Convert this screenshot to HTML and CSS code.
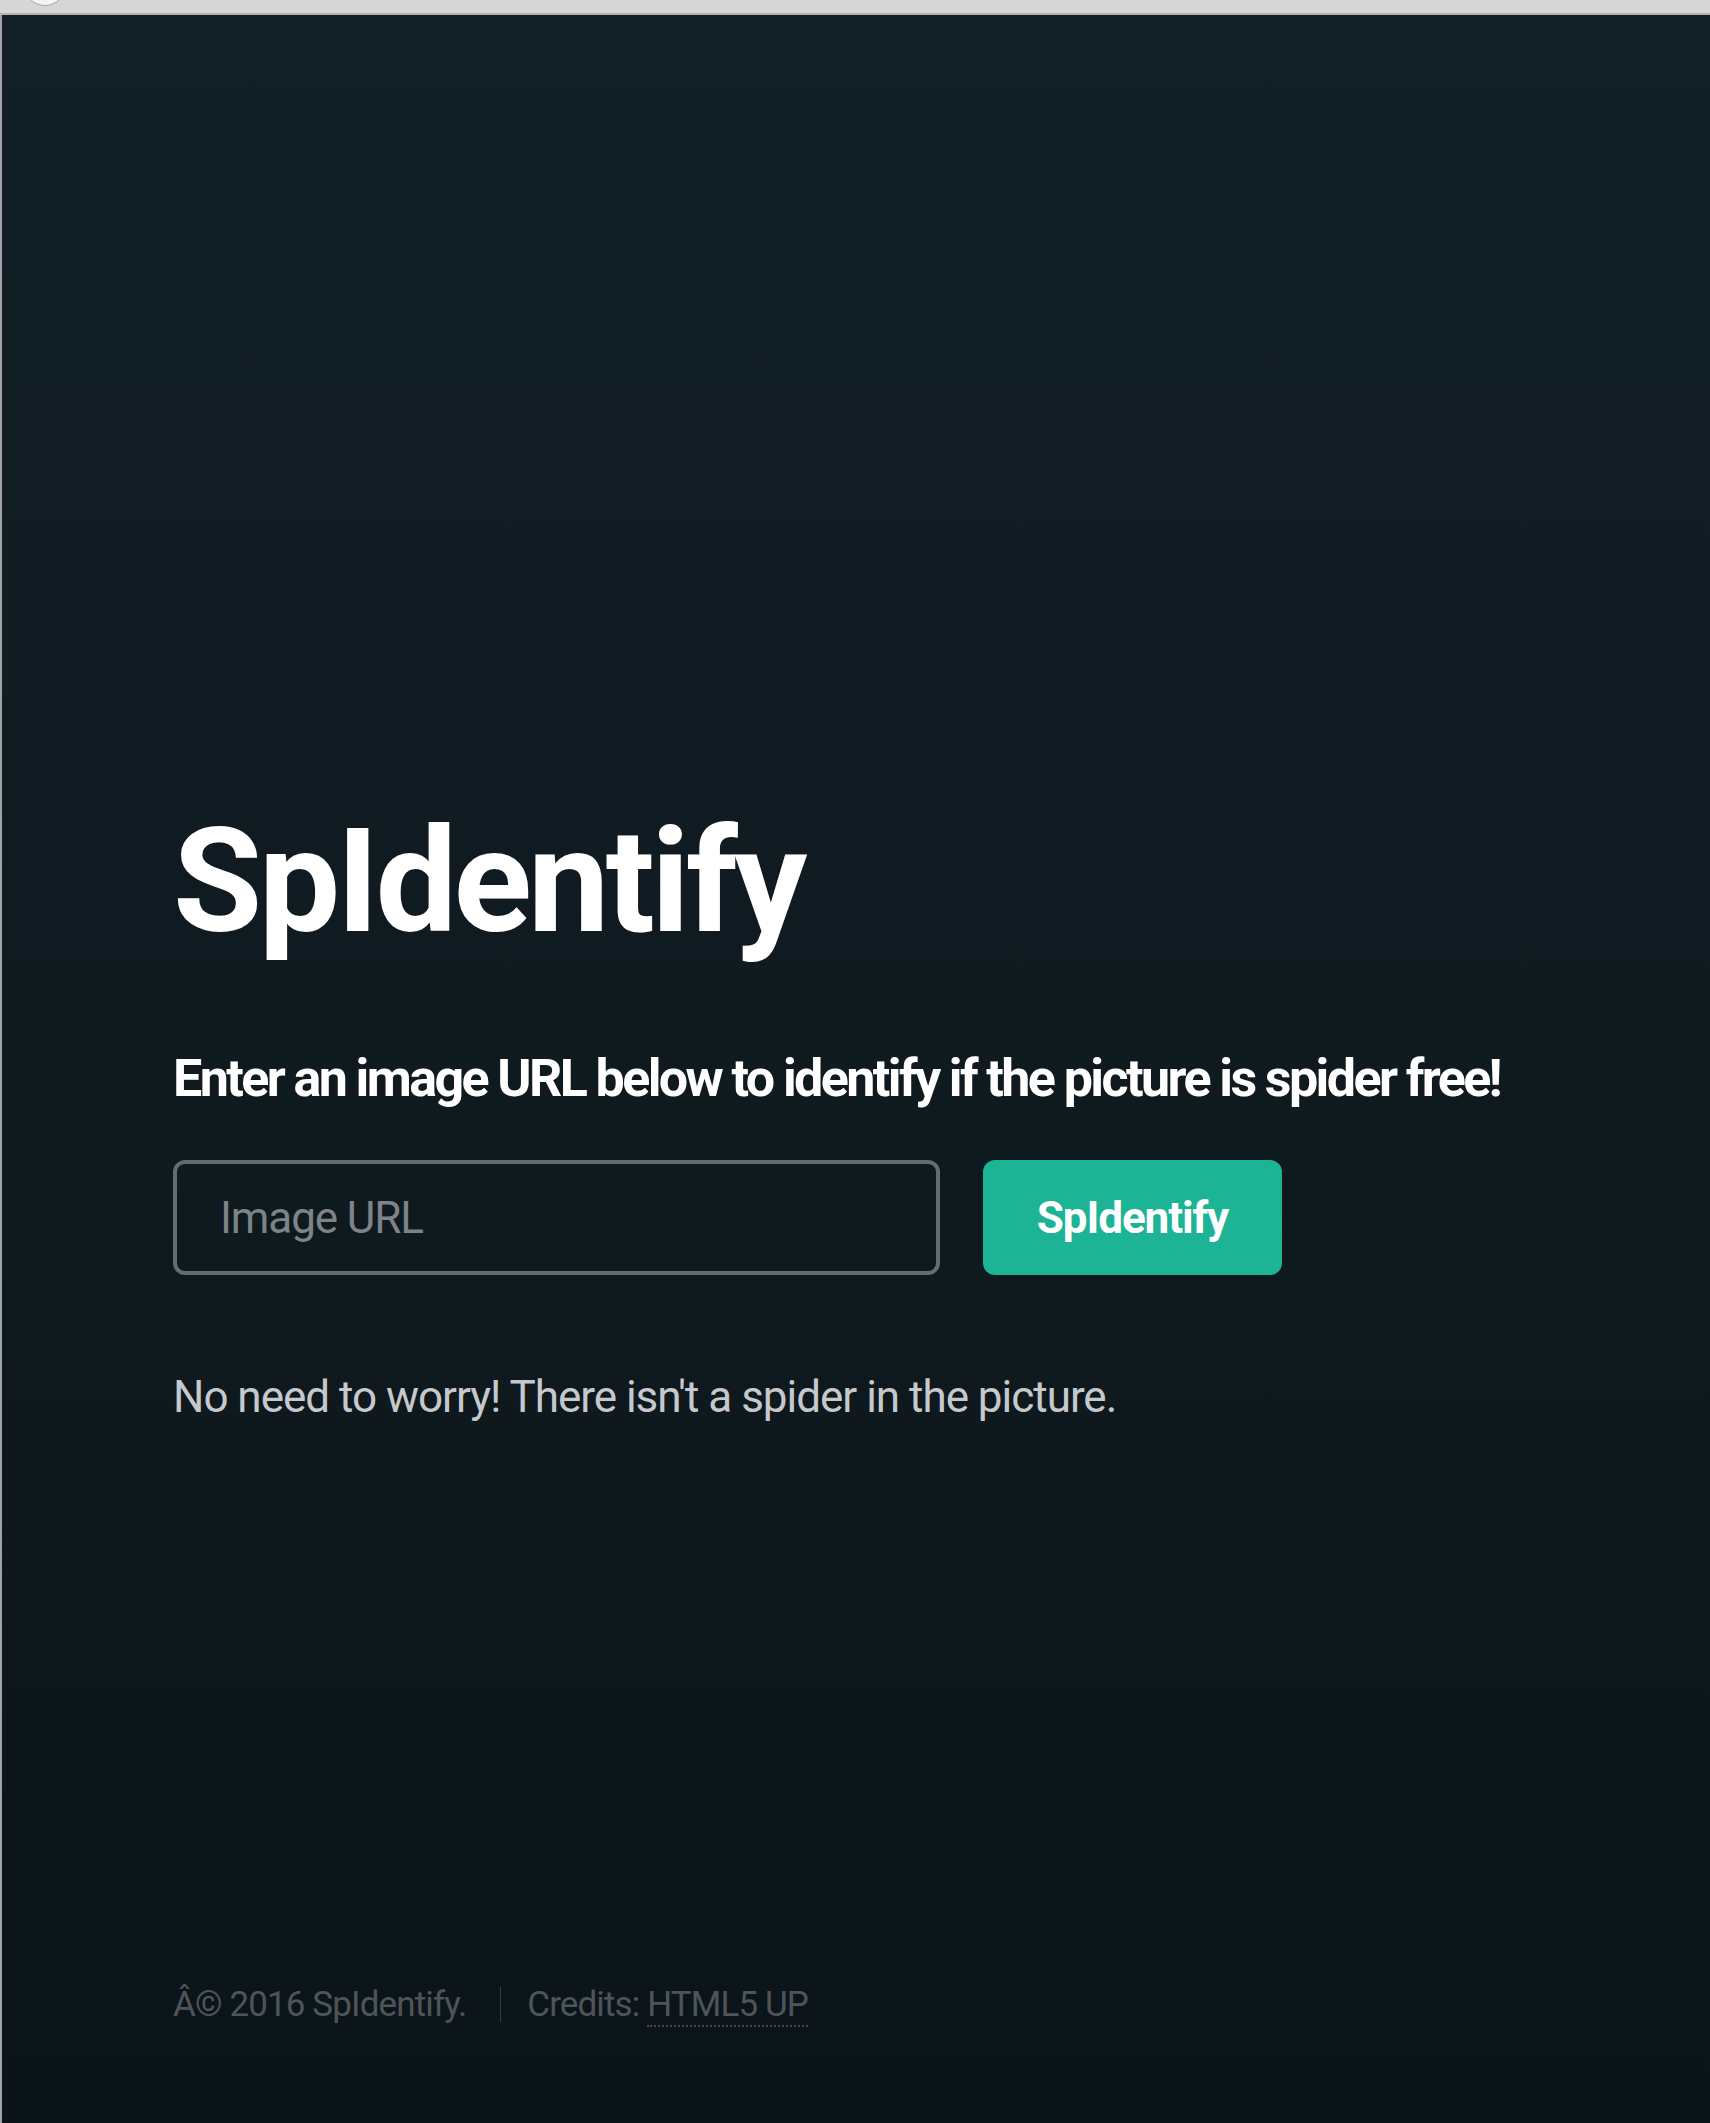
FILE: index.html
```html
<!DOCTYPE html>
<html>
  <head>
    <title>SpIdentify</title>
    <link rel="stylesheet" href="styles.css">
  </head>
  <body>
    <div class="chrome"><span class="chrome-dot"></span></div>
    <div class="page">
      <div class="main">
        <h1>SpIdentify</h1>
        <p class="lead">Enter an image URL below to identify if the picture is spider free!</p>

        <div class="form-row">
          <input type="text" id="imageurl" placeholder="Image URL" />
          <input type="submit" id="identify" value="SpIdentify" />
        </div>

        <p id="result">No need to worry! There isn't a spider in the picture.</p>
      </div>

      <footer class="footer">
        <ul class="copyright">
          <li>Â© 2016 SpIdentify.</li>
          <li>Credits: <a href="#">HTML5 UP</a></li>
        </ul>
      </footer>
    </div>
  </body>
</html>
```

FILE: styles.css
```css
html,
body {
  margin: 0;
  padding: 0;
}

body {
  background-color: #0f1a20;
  font-family: Roboto, "Liberation Sans", sans-serif;
  color: rgba(255, 255, 255, 0.75);
}

.chrome {
  position: relative;
  height: 13px;
  background-color: #d6d6d6;
  border-bottom: 2px solid #b4b4b4;
  overflow: hidden;
}

.chrome-dot {
  position: absolute;
  left: 24px;
  top: -36px;
  width: 40px;
  height: 40px;
  border-radius: 50%;
  background-color: #f4f4f4;
  border: 1px solid #a8a8a8;
}

.page {
  display: flex;
  flex-direction: column;
  min-height: 2108px;
  box-sizing: border-box;
  border-left: 2px solid #a3a3a3;
  background: linear-gradient(to bottom, #121f26 0%, #0f1a1f 55%, #0b1418 100%);
}

.main {
  padding: 794px 0 0 171px;
}

h1 {
  margin: 0;
  font-size: 145px;
  line-height: 1;
  font-weight: 700;
  letter-spacing: -0.025em;
  color: #ffffff;
}

.lead {
  margin: 99px 0 0 0;
  font-size: 52px;
  line-height: 1;
  font-weight: 700;
  letter-spacing: -0.05em;
  color: #ffffff;
}

.form-row {
  display: flex;
  gap: 43px;
  margin-top: 55px;
}

input[type="text"],
input[type="submit"] {
  height: 115px;
  box-sizing: border-box;
  border-radius: 12px;
  font-family: Roboto, "Liberation Sans", sans-serif;
  font-size: 44px;
  letter-spacing: -0.025em;
  margin: 0;
}

input[type="text"] {
  width: 767px;
  padding: 0 43px;
  background: transparent;
  border: 4px solid #656c70;
  color: #ffffff;
  font-weight: 400;
}

input[type="text"]::placeholder {
  color: #7d8386;
}

input[type="submit"] {
  width: 299px;
  border: 0;
  background-color: #1cb495;
  color: #ffffff;
  font-weight: 700;
  cursor: pointer;
}

#result {
  margin: 100px 0 0 0;
  font-size: 44px;
  line-height: 1;
  font-weight: 400;
  letter-spacing: -0.023em;
  color: #c6c9cb;
}

.footer {
  margin-top: auto;
  padding: 0 0 101px 171px;
}

.copyright {
  list-style: none;
  margin: 0;
  padding: 0;
  font-size: 35px;
  line-height: 1;
  letter-spacing: -0.025em;
  color: #4d5559;
}

.copyright li {
  display: inline-block;
}

.copyright li + li {
  border-left: 1px solid #333c40;
  margin-left: 26px;
  padding-left: 26px;
}

.copyright a {
  color: #4d5559;
  text-decoration: none;
  border-bottom: 2px dotted #3f474b;
}
```
